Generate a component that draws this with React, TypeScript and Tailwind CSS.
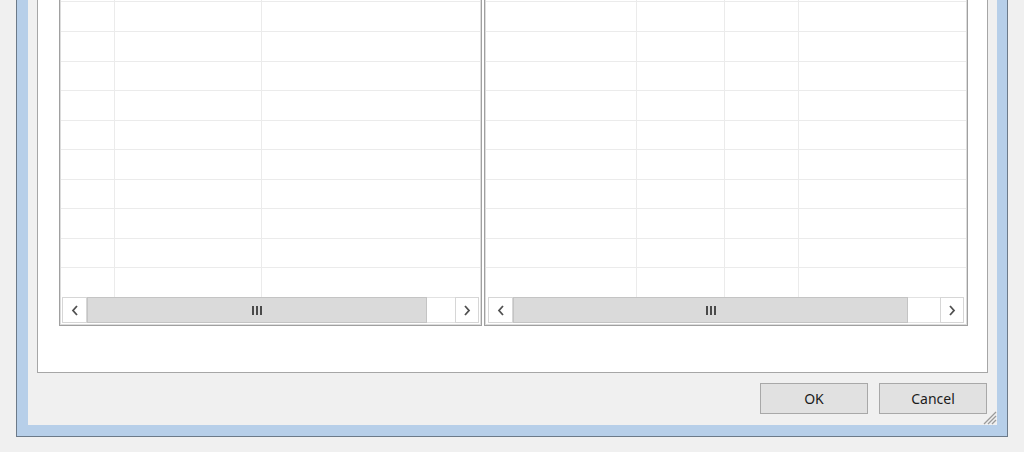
import React from 'react';

const rowHeights = [2, 30, 30, 29, 30, 29, 30, 29, 30, 29];

type GridProps = {
    cols: number[];
    width: number;
    inset: number;
    arrowW: number;
    thumbW: number;
};

const Chevron: React.FC<{ dir: 'left' | 'right' }> = ({ dir }) => (
    <svg width="8" height="11" viewBox="0 0 8 11" fill="none">
        <polyline
            points={dir === 'left' ? '6,1 2,5.5 6,10' : '2,1 6,5.5 2,10'}
            stroke="#505050"
            strokeWidth="1.8"
        />
    </svg>
);

const Gripper = () => (
    <div className="flex gap-[2px]">
        <div className="w-[2px] h-[9px] bg-[#4a4a4a]" />
        <div className="w-[2px] h-[9px] bg-[#4a4a4a]" />
        <div className="w-[2px] h-[9px] bg-[#4a4a4a]" />
    </div>
);

const Row: React.FC<{ cols: number[]; height?: number; last?: boolean }> = ({ cols, height, last }) => (
    <div
        className={last ? 'flex flex-1' : 'flex border-b border-[#ebebeb]'}
        style={height ? { height } : undefined}
    >
        {cols.map((w, i) => (
            <div key={i} className="border-r border-[#ebebeb] shrink-0" style={{ width: w }} />
        ))}
        <div className="flex-1" />
    </div>
);

const DataGrid: React.FC<GridProps> = ({ cols, width, inset, arrowW, thumbW }) => (
    <div className="border-x border-b border-[#a0a0a0] bg-white" style={{ width }}>
        <div className="border-x border-b border-[#dcdcdc] h-[325px] flex flex-col">
            <div className="h-[297px] flex flex-col">
                {rowHeights.map((h, i) => (
                    <Row key={i} cols={cols} height={h} />
                ))}
                <Row cols={cols} last />
            </div>
            <div className="h-[26px] flex" style={{ paddingLeft: inset, paddingRight: inset }}>
                <div className="h-full border border-[#d6d6d6] bg-white flex items-center justify-center shrink-0" style={{ width: arrowW }}>
                    <Chevron dir="left" />
                </div>
                <div className="h-full border border-[#c4c4c4] bg-[#dadada] flex items-center justify-center shrink-0" style={{ width: thumbW }}>
                    <Gripper />
                </div>
                <div className="h-full flex-1 bg-white border-y border-[#e2e2e2]" />
                <div className="h-full border border-[#d6d6d6] bg-white flex items-center justify-center shrink-0" style={{ width: arrowW - 1 }}>
                    <Chevron dir="right" />
                </div>
            </div>
        </div>
    </div>
);

const Button: React.FC<{ label: string }> = ({ label }) => (
    <button className="w-[108px] h-[31px] border border-[#a8a8a8] bg-[#e1e1e1] text-[14px] text-[#1b1b1b] flex items-center justify-center">
        {label}
    </button>
);

export default function App() {
    return (
        <div
            className="w-[1024px] h-[452px] bg-[#f0f0f0] overflow-hidden"
            style={{ fontFamily: '"Noto Sans", "Open Sans", sans-serif' }}
        >
            <div className="ml-[16px] w-[992px] border-x border-b border-[#6c7a89]">
                <div className="border-l-[11px] border-r-[10px] border-b-[11px] border-[#b7cfe9]">
                    <div className="relative h-[425px] bg-[#f0f0f0] flex flex-col">
                        <div className="ml-[9px] w-[951px] h-[373px] bg-white border-x border-b border-[#a6a6a6] flex items-start pl-[21px] gap-[2px]">
                            <DataGrid cols={[54, 147]} width={423} inset={1} arrowW={25} thumbW={340} />
                            <DataGrid cols={[151, 88, 74]} width={484} inset={2} arrowW={25} thumbW={395} />
                        </div>
                        <div className="flex justify-end gap-[11px] mt-[10px] pr-[10px]">
                            <Button label="OK" />
                            <Button label="Cancel" />
                        </div>
                        <svg className="absolute right-0 bottom-0" width="16" height="16" viewBox="0 0 16 16">
                            <line x1="15" y1="3" x2="3" y2="15" stroke="#9a9a9a" strokeWidth="1.2" />
                            <line x1="15" y1="7" x2="7" y2="15" stroke="#9a9a9a" strokeWidth="1.2" />
                            <line x1="15" y1="11" x2="11" y2="15" stroke="#9a9a9a" strokeWidth="1.2" />
                        </svg>
                    </div>
                </div>
            </div>
        </div>
    );
}
